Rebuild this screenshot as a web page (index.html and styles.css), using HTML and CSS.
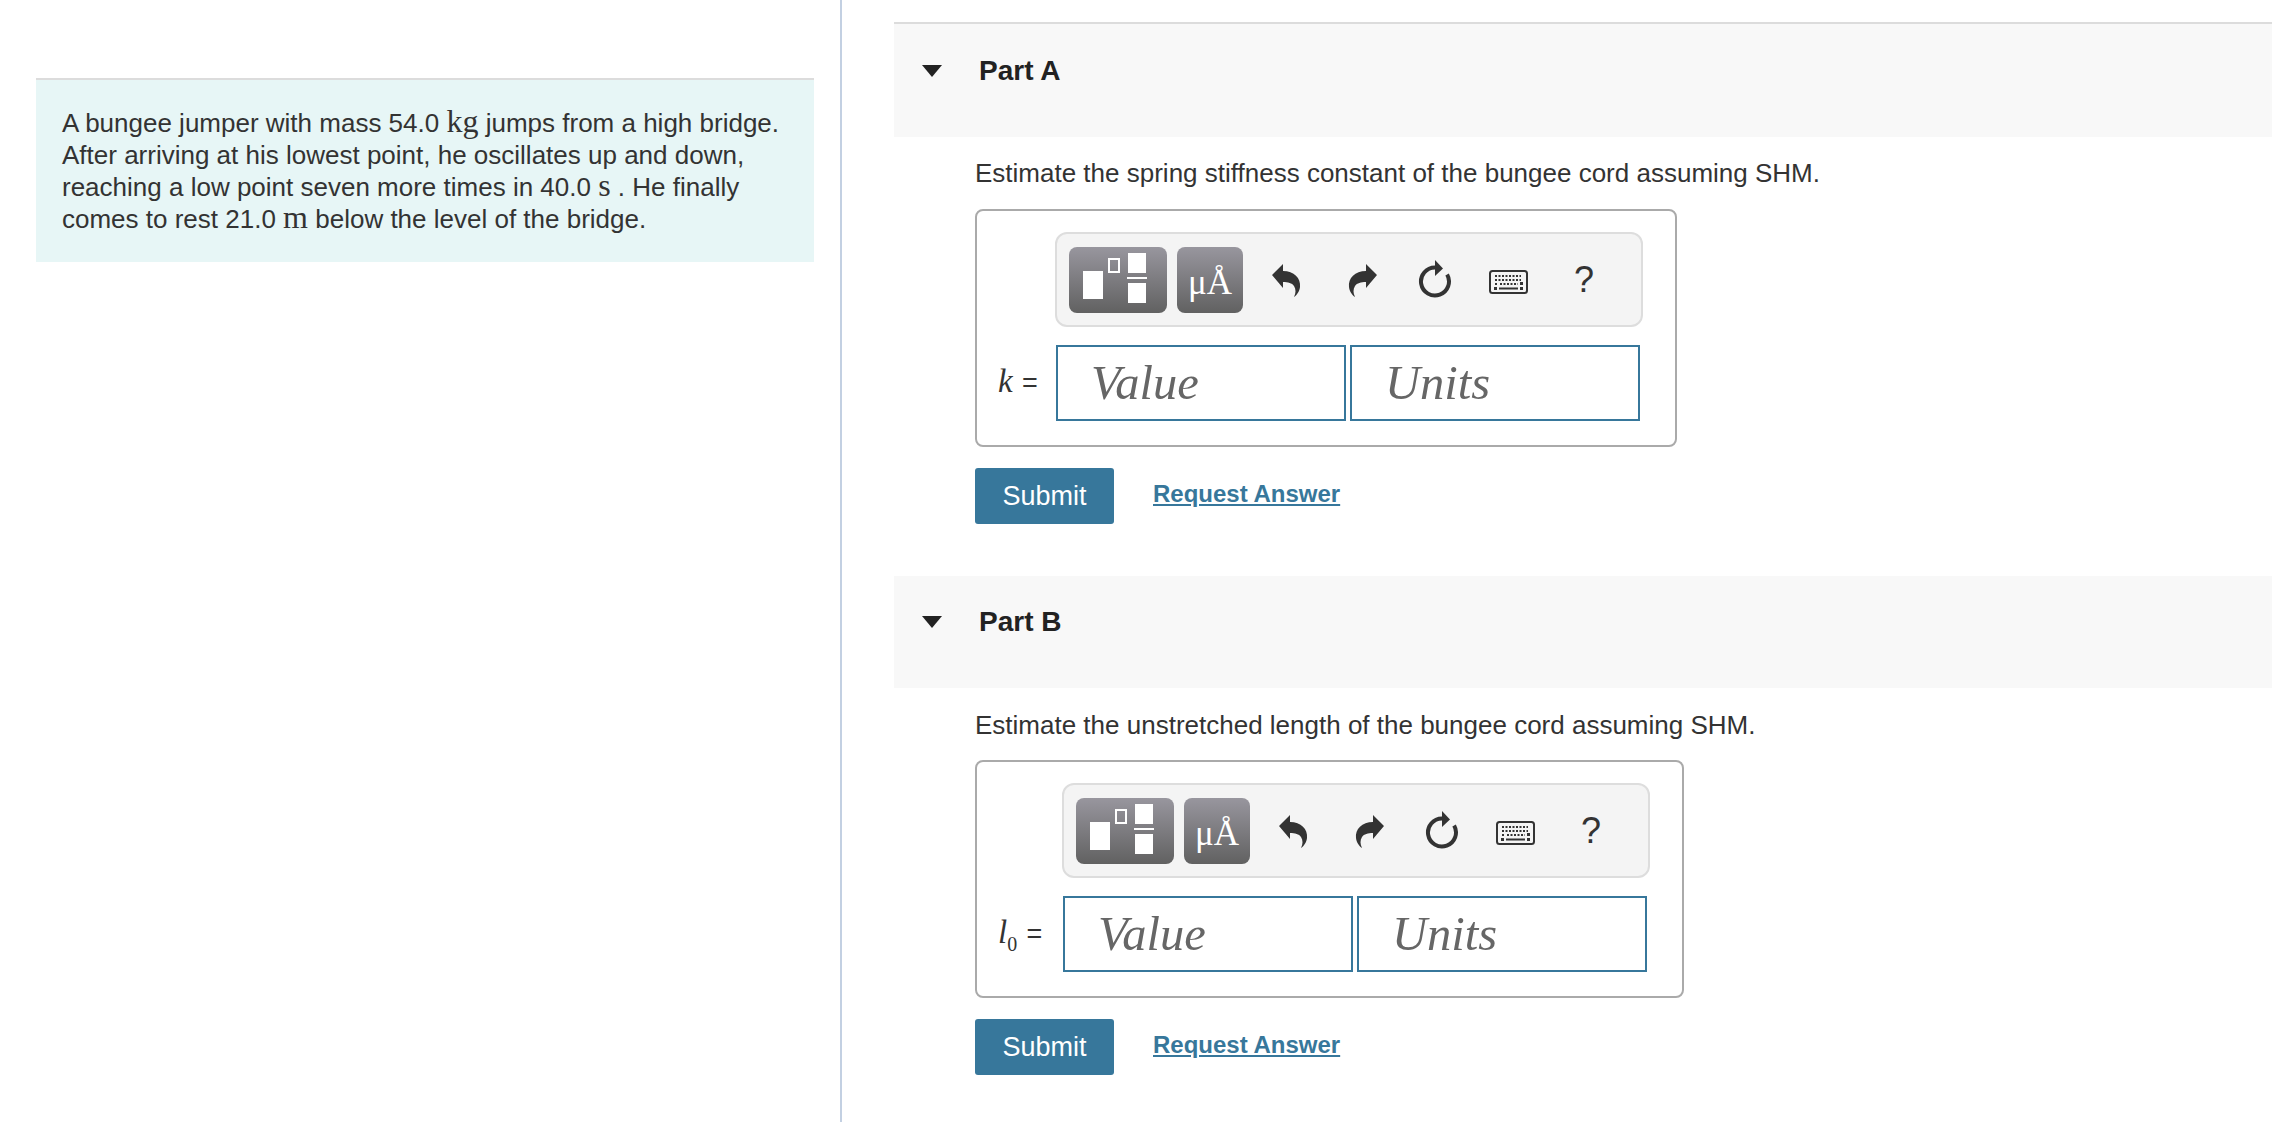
FILE: index.html

```html
<!doctype html>
<html lang="en">
	<head>
		<meta charset="utf-8">
		<link rel="stylesheet" href="styles.css">
		<title>Bungee jumper</title>
	</head>
	<body>
		<svg class="defs" xmlns="http://www.w3.org/2000/svg">
			<symbol id="i-undo" viewBox="0 0 30 34">
				<path d="M1 12 12 1v7c11 0 18 7 17 16-.4 4-3 8-6 10 2-4 2-8 0-11-2-3-6-4-11-4v6z"/>
			</symbol>
			<symbol id="i-reset" viewBox="0 0 34 38">
				<path d="M29.100 14.500A14 14 0 1 1 17 7.500" fill="none" stroke="#333" stroke-width="4"/>
				<path d="M17 0 25 8.500 17 16z"/>
			</symbol>
			<symbol id="i-keys" viewBox="0 0 39 24">
				<rect x="1" y="1" width="37" height="22" rx="2.500" fill="#f4f4f4" stroke="#333" stroke-width="2"/>
				<path d="M6 6h26M6 10h26M6 14h3M11 14h18" fill="none" stroke="#333" stroke-width="2" stroke-dasharray="2 1.500"/>
				<path d="M10 18.500h19" stroke="#333" stroke-width="2"/>
				<path d="M5 17h3v3H5zM31 17h3v3h-3zM31 12h3v3h-3z"/>
			</symbol>
		</svg>

		<div class="page">
			<div class="intro-col">
				<div class="intro">
					A bungee jumper with mass 54.0 <span class="unit">kg</span> jumps from a high bridge. After arriving at his lowest point, he oscillates up and down, reaching a low point seven more times in 40.0 <span class="unit">s</span> . He finally comes to rest 21.0 <span class="unit">m</span> below the level of the bridge.
				</div>
			</div>

			<div class="parts-col">
				<div class="part part-a">
					<div class="part-head"><span class="caret"></span><h2>Part A</h2></div>
					<div class="part-body">
						<p class="question">Estimate the spring stiffness constant of the bungee cord assuming SHM.</p>
						<div class="answer-box">
							<div class="toolbar">
								<div class="tool-btn tool-frac">
									<span class="frac-big"></span>
									<span class="frac-small"></span>
									<span class="frac-stack"><i></i><b></b><i></i></span>
								</div>
								<div class="tool-btn tool-units">μÅ</div>
								<svg class="ico ico-undo"><use href="#i-undo"/></svg>
								<svg class="ico ico-redo"><use href="#i-undo"/></svg>
								<svg class="ico ico-reset"><use href="#i-reset"/></svg>
								<svg class="ico ico-keys"><use href="#i-keys"/></svg>
								<span class="ico-help">?</span>
							</div>
							<div class="var"><i>k</i> <span class="eq">=</span></div>
							<div class="inputs">
								<div class="field">Value</div>
								<div class="field">Units</div>
							</div>
						</div>
						<div class="actions">
							<button class="submit">Submit</button>
							<a class="request" href="#">Request Answer</a>
						</div>
					</div>
				</div>

				<div class="part part-b">
					<div class="part-head"><span class="caret"></span><h2>Part B</h2></div>
					<div class="part-body">
						<p class="question">Estimate the unstretched length of the bungee cord assuming SHM.</p>
						<div class="answer-box">
							<div class="toolbar">
								<div class="tool-btn tool-frac">
									<span class="frac-big"></span>
									<span class="frac-small"></span>
									<span class="frac-stack"><i></i><b></b><i></i></span>
								</div>
								<div class="tool-btn tool-units">μÅ</div>
								<svg class="ico ico-undo"><use href="#i-undo"/></svg>
								<svg class="ico ico-redo"><use href="#i-undo"/></svg>
								<svg class="ico ico-reset"><use href="#i-reset"/></svg>
								<svg class="ico ico-keys"><use href="#i-keys"/></svg>
								<span class="ico-help">?</span>
							</div>
							<div class="var"><i>l</i><sub>0</sub> <span class="eq">=</span></div>
							<div class="inputs">
								<div class="field">Value</div>
								<div class="field">Units</div>
							</div>
						</div>
						<div class="actions">
							<button class="submit">Submit</button>
							<a class="request" href="#">Request Answer</a>
						</div>
					</div>
				</div>
			</div>
		</div>
	</body>
</html>
```

FILE: styles.css

```css
html, body {
	height: 100%;
}

body {
	background: #fff;
	color: #333;
	font: 26px/32px "Liberation Sans", Arial, sans-serif;
	margin: 0;
	overflow: hidden;
}

.defs {
	display: none;
}

.page {
	display: flex;
	height: 100%;
}

.intro-col {
	border-right: 2px solid #c3d0e2;
	flex: none;
	padding: 78px 26px 0 36px;
	width: 778px;
}

.intro {
	background: #e7f6f6;
	border-top: 2px solid #dcdcdc;
	box-sizing: border-box;
	height: 184px;
	padding: 27px 20px 0 26px;
}

.unit {
	font-family: "Liberation Serif", serif;
	font-size: 32px;
	line-height: 0;
}

.parts-col {
	flex: 1;
	padding: 22px 0 0 52px;
}

.part-head {
	align-items: flex-start;
	background: #f8f8f8;
	box-sizing: border-box;
	display: flex;
	height: 112px;
	padding: 29px 0 0 28px;
}

.part-a .part-head {
	border-top: 2px solid #dcdcdc;
	height: 115px;
}

.part-b {
	margin-top: 52px;
}

.part-b .part-head {
	padding-top: 28px;
}

.caret {
	border-left: 10.500px solid transparent;
	border-right: 10.500px solid transparent;
	border-top: 12px solid #222;
	margin-top: 12px;
}

h2 {
	color: #222;
	font-size: 28px;
	font-weight: 700;
	line-height: 36px;
	margin: 0 0 0 37px;
}

.part-body {
	padding: 20px 0 0 81px;
}

.part-b .part-body {
	padding-top: 21px;
}

.question {
	line-height: 32px;
	margin: 0 0 20px;
}

.part-b .question {
	margin-bottom: 19px;
}

.answer-box {
	border: 2px solid #aaa;
	border-radius: 8px;
	display: inline-grid;
	grid-template-columns: 58px auto;
	padding: 21px 35px 24px 21px;
	row-gap: 18px;
	vertical-align: top;
}

.part-b .answer-box {
	grid-template-columns: 65px auto;
}

.toolbar {
	align-items: center;
	background: #f4f4f4;
	border: 2px solid #ddd;
	border-radius: 12px;
	box-sizing: border-box;
	display: flex;
	grid-column: 2;
	height: 95px;
	margin-left: -1px;
	margin-right: -3px;
	padding-left: 12px;
}

.tool-btn {
	background: linear-gradient(#98969e, #616161);
	border-radius: 8px;
	box-sizing: border-box;
	flex: none;
	height: 66px;
}

.tool-frac {
	display: flex;
	margin-right: 10px;
	padding: 6px 0 0 14px;
	width: 98px;
}

.frac-big {
	align-self: flex-start;
	background: #fff;
	height: 28px;
	margin-top: 18px;
	width: 20px;
}

.frac-small {
	align-self: flex-start;
	border: 2px solid #fff;
	box-sizing: border-box;
	height: 15px;
	margin: 5px 7px 0 5px;
	width: 12px;
}

.frac-stack {
	display: flex;
	flex-direction: column;
	gap: 4px;
	width: 20px;
}

.frac-stack i {
	background: #fff;
	display: block;
	height: 20px;
	margin: 0 1px;
}

.frac-stack b {
	background: #fff;
	display: block;
	height: 2px;
}

.tool-units {
	color: #fff;
	font: 35px/72px "Liberation Serif", serif;
	text-align: center;
	width: 66px;
}

.ico {
	fill: #333;
	flex: none;
}

.ico-undo, .ico-redo {
	height: 34px;
	width: 30px;
}

.ico-undo {
	margin-left: 28px;
}

.ico-redo {
	margin-left: 47px;
	transform: scaleX(-1);
}

.ico-reset {
	height: 38px;
	margin-bottom: 2px;
	margin-left: 40px;
	width: 34px;
}

.ico-keys {
	height: 24px;
	margin-left: 37px;
	margin-top: 5px;
	width: 39px;
}

.ico-help {
	color: #333;
	font-size: 36px;
	margin-left: 46px;
}

.var {
	align-self: center;
	font-family: "Liberation Serif", serif;
	font-size: 33px;
	margin-top: -3px;
	white-space: nowrap;
}

.var .eq {
	font-family: "Liberation Sans", sans-serif;
	font-size: 27px;
	margin-left: 1px;
}

.var sub {
	font-size: 20px;
	line-height: 0;
}

.inputs {
	display: flex;
	gap: 4px;
}

.field {
	border: 2px solid #37779b;
	box-sizing: border-box;
	color: #666;
	font: italic 48.500px/72px "Liberation Serif", serif;
	height: 76px;
	padding-left: 33px;
	width: 290px;
}

.actions {
	align-items: flex-start;
	display: flex;
	margin-top: 21px;
}

.submit {
	background: #37779b;
	border: 0;
	border-radius: 3px;
	color: #fff;
	font: 27px/32px "Liberation Sans", Arial, sans-serif;
	height: 56px;
	padding: 0;
	width: 139px;
}

.request {
	color: #37779b;
	font-size: 24px;
	font-weight: 700;
	line-height: 32px;
	margin: 10px 0 0 39px;
}
```
